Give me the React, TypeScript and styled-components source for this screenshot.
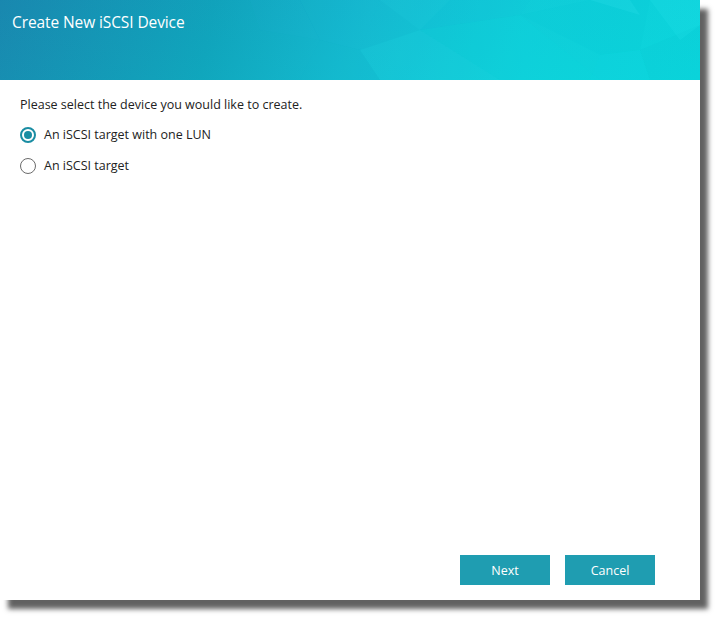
import * as React from "react";
import styled, { createGlobalStyle } from "styled-components";

const GlobalStyle = createGlobalStyle`
  html, body {
    margin: 0;
    padding: 0;
    background: #ffffff;
  }
  body {
    font-family: "Open Sans", "Noto Sans", "Liberation Sans", sans-serif;
  }
`;

const Page = styled.div`
  width: 720px;
  height: 620px;
  background: #ffffff;
`;

const Dialog = styled.div`
  width: 700px;
  height: 600px;
  display: flex;
  flex-direction: column;
  background: #ffffff;
  box-shadow: 8px 9px 5px rgba(0, 0, 0, 0.62);
`;

const Header = styled.div`
  position: relative;
  height: 80px;
  flex: 0 0 80px;
  overflow: hidden;
  background:
    linear-gradient(180deg, rgba(10, 80, 110, 0.06) 0%, rgba(0, 160, 150, 0.08) 100%),
    linear-gradient(100deg, #1a8bb3 0%, #11a7c0 30%, #16bfd6 52%, #10d4df 75%, #0cdbe2 100%);
`;

const Poly = styled.svg`
  position: absolute;
  top: 0;
  left: 0;
  width: 700px;
  height: 80px;
`;

const Title = styled.h1`
  position: relative;
  margin: 0;
  padding: 11px 0 0 12px;
  font-size: 15.5px;
  font-weight: 400;
  color: #ffffff;
  letter-spacing: -0.1px;
`;

const Body = styled.div`
  flex: 1;
  display: flex;
  flex-direction: column;
  padding: 16px 20px 0 20px;
`;

const Prompt = styled.p`
  margin: 0 0 13px 0;
  font-size: 12.5px;
  line-height: 17px;
  color: #222222;
`;

const Options = styled.div`
  display: flex;
  flex-direction: column;
  gap: 13px;
`;

const Option = styled.label`
  display: flex;
  align-items: center;
  gap: 8px;
  font-size: 12.5px;
  line-height: 18px;
  color: #222222;
  cursor: pointer;
`;

const Ring = styled.span<{ $checked: boolean }>`
  box-sizing: border-box;
  width: 16px;
  height: 16px;
  border-radius: 50%;
  border: ${p => (p.$checked ? "2px solid #1a8da3" : "1px solid #6b6b6b")};
  display: flex;
  align-items: center;
  justify-content: center;
  background: #ffffff;

  &::after {
    content: "";
    width: 8px;
    height: 8px;
    border-radius: 50%;
    background: #1a8da3;
    display: ${p => (p.$checked ? "block" : "none")};
  }
`;

const Footer = styled.div`
  display: flex;
  justify-content: flex-end;
  gap: 15px;
  padding: 0 45px 15px 0;
`;

const Button = styled.button`
  width: 90px;
  height: 30px;
  border: none;
  background: #1f9db1;
  color: #ffffff;
  font-family: "Open Sans", "Noto Sans", "Liberation Sans", sans-serif;
  font-size: 12.5px;
  cursor: pointer;
`;

const options = ["An iSCSI target with one LUN", "An iSCSI target"];

const polygons: { points: string; fill: string; op: number }[] = [
  { points: "380,0 450,0 420,30", fill: "#2ad8ea", op: 0.12 },
  { points: "420,30 450,0 530,0 520,15", fill: "#0fc8da", op: 0.12 },
  { points: "420,30 520,15 600,80 500,80", fill: "#0cd6e0", op: 0.18 },
  { points: "360,50 420,30 500,80 380,80", fill: "#22e0ea", op: 0.14 },
  { points: "520,15 590,0 650,0 640,50 600,55", fill: "#06c8d6", op: 0.16 },
  { points: "590,0 630,0 640,15", fill: "#40eef5", op: 0.15 },
  { points: "640,50 700,25 700,80 650,80", fill: "#08c6d3", op: 0.2 },
  { points: "600,55 640,50 650,80 590,80", fill: "#10d8e4", op: 0.15 },
  { points: "650,0 700,0 700,25 680,40", fill: "#30e8f0", op: 0.15 },
  { points: "300,0 380,0 360,50 320,40", fill: "#1ab8d8", op: 0.1 },
  { points: "320,40 360,50 380,80 300,80", fill: "#10bcd0", op: 0.1 },
  { points: "250,0 300,0 320,40 260,30", fill: "#20b0d8", op: 0.08 },
];

const App = (): JSX.Element => {
  const [selected, setSelected] = React.useState(0);

  return (
    <Page>
      <GlobalStyle />
      <Dialog>
        <Header>
          <Poly viewBox="0 0 700 80" xmlns="http://www.w3.org/2000/svg">
            {polygons.map((p, i) => (
              <polygon key={i} points={p.points} fill={p.fill} opacity={p.op} />
            ))}
          </Poly>
          <Title>Create New iSCSI Device</Title>
        </Header>
        <Body>
          <Prompt>Please select the device you would like to create.</Prompt>
          <Options>
            {options.map((label, i) => (
              <Option key={i} onClick={() => setSelected(i)}>
                <Ring $checked={selected === i} />
                {label}
              </Option>
            ))}
          </Options>
        </Body>
        <Footer>
          <Button>Next</Button>
          <Button>Cancel</Button>
        </Footer>
      </Dialog>
    </Page>
  );
};

export default App;
